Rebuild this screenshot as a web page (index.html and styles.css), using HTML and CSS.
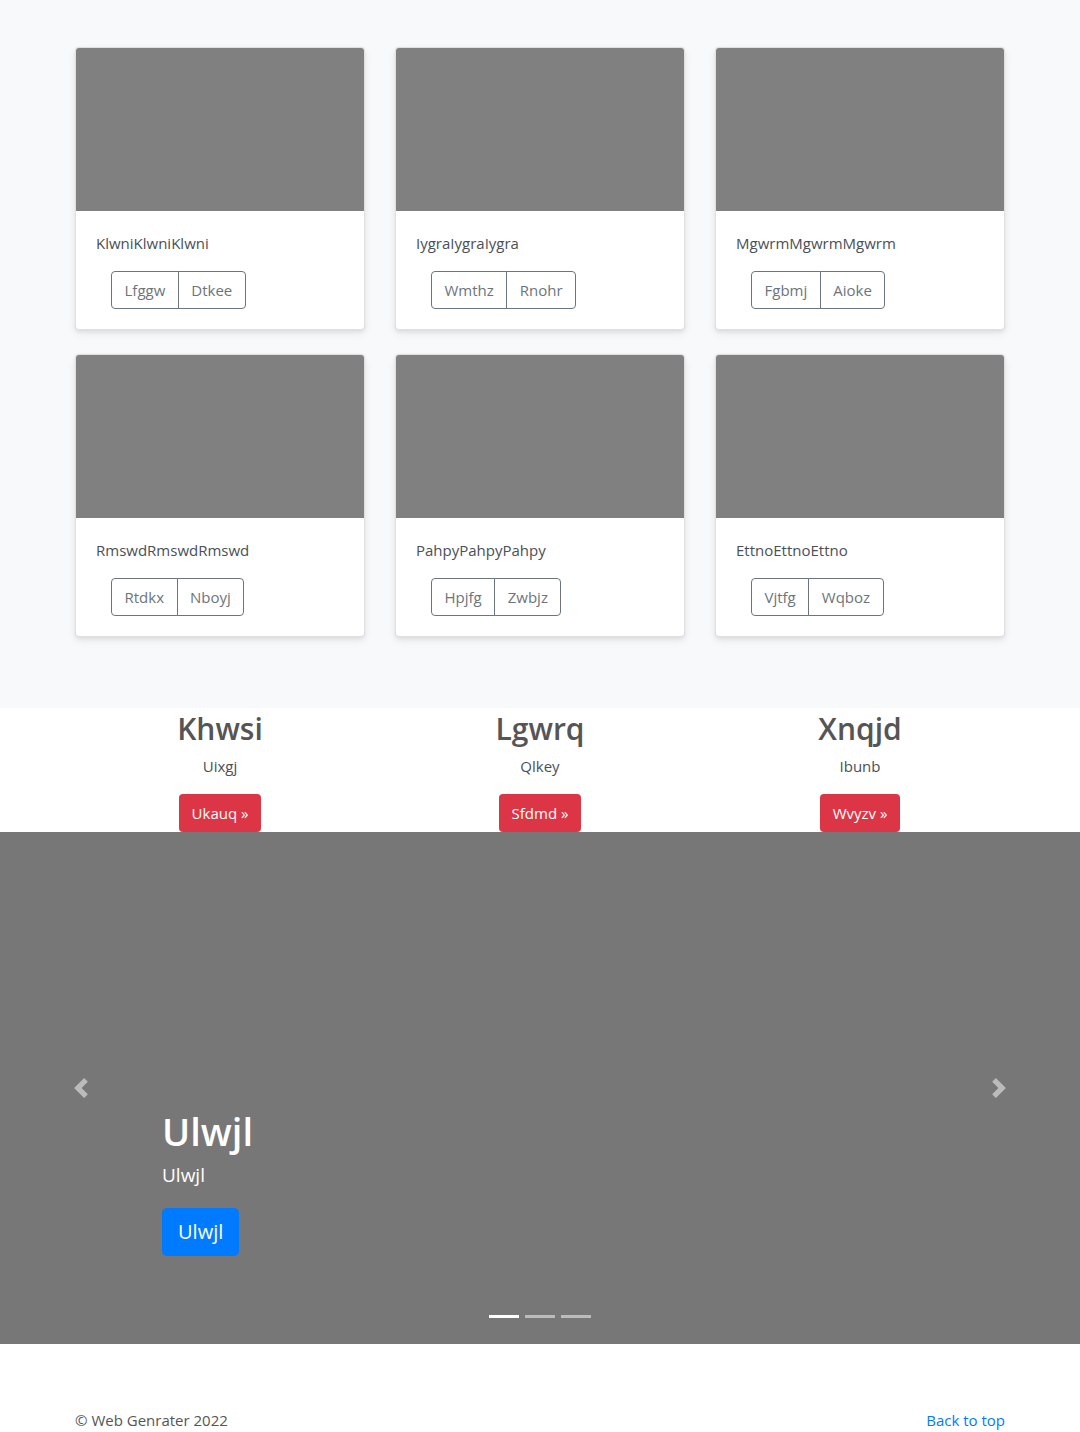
FILE: index.html
```html
<!DOCTYPE html>
<html lang="en">
<head>
<meta charset="utf-8">
<title>Album</title>
<link rel="stylesheet" href="styles.css">
</head>
<body>
<main>
  <section class="album">
    <div class="container">
      <div class="grid">
        <div class="card"><div class="card-img"></div><div class="card-body"><p class="card-text">KlwniKlwniKlwni</p><div class="btn-group"><span class="btn-o">Lfggw</span><span class="btn-o">Dtkee</span></div></div></div>
        <div class="card"><div class="card-img"></div><div class="card-body"><p class="card-text">IygraIygraIygra</p><div class="btn-group"><span class="btn-o">Wmthz</span><span class="btn-o">Rnohr</span></div></div></div>
        <div class="card"><div class="card-img"></div><div class="card-body"><p class="card-text">MgwrmMgwrmMgwrm</p><div class="btn-group"><span class="btn-o">Fgbmj</span><span class="btn-o">Aioke</span></div></div></div>
        <div class="card"><div class="card-img"></div><div class="card-body"><p class="card-text">RmswdRmswdRmswd</p><div class="btn-group"><span class="btn-o">Rtdkx</span><span class="btn-o">Nboyj</span></div></div></div>
        <div class="card"><div class="card-img"></div><div class="card-body"><p class="card-text">PahpyPahpyPahpy</p><div class="btn-group"><span class="btn-o">Hpjfg</span><span class="btn-o">Zwbjz</span></div></div></div>
        <div class="card"><div class="card-img"></div><div class="card-body"><p class="card-text">EttnoEttnoEttno</p><div class="btn-group"><span class="btn-o">Vjtfg</span><span class="btn-o">Wqboz</span></div></div></div>
      </div>
    </div>
  </section>

  <section class="features">
    <div class="container feat-row">
      <div class="feat"><h2>Khwsi</h2><p>Uixgj</p><a class="btn-danger" href="#">Ukauq &raquo;</a></div>
      <div class="feat"><h2>Lgwrq</h2><p>Qlkey</p><a class="btn-danger" href="#">Sfdmd &raquo;</a></div>
      <div class="feat"><h2>Xnqjd</h2><p>Ibunb</p><a class="btn-danger" href="#">Wvyzv &raquo;</a></div>
    </div>
  </section>

  <section class="carousel">
    <a class="ctrl ctrl-prev" href="#"><svg width="20" height="20" viewBox="0 0 8 8"><path fill="#fff" d="M5.25 0l-4 4 4 4 1.5-1.5-2.5-2.5 2.5-2.5-1.5-1.5z"/></svg></a>
    <div class="caption">
      <h1>Ulwjl</h1>
      <p class="cap-text">Ulwjl</p>
      <a class="btn-primary" href="#">Ulwjl</a>
    </div>
    <a class="ctrl ctrl-next" href="#"><svg width="20" height="20" viewBox="0 0 8 8"><path fill="#fff" d="M2.75 0l-1.5 1.5 2.5 2.5-2.5 2.5 1.5 1.5 4-4-4-4z"/></svg></a>
    <ol class="indicators"><li class="active"></li><li></li><li></li></ol>
  </section>
</main>
<footer class="footer container">
  <p class="copy">&copy; Web Genrater 2022</p>
  <a class="top-link" href="#">Back to top</a>
</footer>
</body>
</html>
```

FILE: styles.css
```css
* { box-sizing: border-box; }
html, body { margin: 0; padding: 0; }
body {
  font-family: "Open Sans", "Noto Sans", sans-serif;
  font-size: 16px;
  line-height: 1.5;
  color: #212529;
  background: #fff;
}
.container { width: 960px; margin: 0 auto; padding: 0 15px; }

.album { background: #f8f9fa; padding: 47px 0 48px; }
.grid {
  display: grid;
  grid-template-columns: repeat(3, 290px);
  column-gap: 30px;
  row-gap: 24px;
  padding-bottom: 23px;
}
.card {
  background: #fff;
  border: 1px solid rgba(0,0,0,.125);
  border-radius: 4px;
  overflow: hidden;
  box-shadow: 0 .125rem .25rem rgba(0,0,0,.075), 0 4px 10px rgba(0,0,0,.06);
}
.card-img { height: 163px; background: #808080; }
.card-body { padding: 20px; }
.card-text { margin: 0 0 16px; font-size: 15px; line-height: 24px; color: #495057; }
.btn-group { display: inline-flex; margin-left: 15px; }
.btn-o {
  display: inline-block;
  border: 1px solid #6c757d;
  color: #6c757d;
  padding: 6px 12.5px;
  font-size: 15px;
  line-height: 24px;
}
.btn-o:first-child { border-radius: 4px 0 0 4px; }
.btn-o:last-child { border-radius: 0 4px 4px 0; margin-left: -1px; }

.features { background: #fff; }
.feat-row { display: grid; grid-template-columns: repeat(3, 1fr); padding: 0; }
.feat { text-align: center; }
.feat h2 { margin: 0 0 6px; padding-top: 2px; font-size: 30px; line-height: 38px; font-weight: 600; color: #555; }
.feat p { margin: 0 0 16px; line-height: 24px; color: #495057; font-size: 15px; }
.btn-danger {
  display: inline-block;
  vertical-align: top;
  background: #dc3545;
  color: #fff;
  text-decoration: none;
  padding: 7px 13px;
  line-height: 24px;
  border-radius: 4px;
  font-size: 15px;
}

.carousel {
  position: relative;
  height: 512px;
  background: #777;
  display: flex;
  align-items: flex-end;
}
.ctrl {
  position: absolute;
  top: 0; bottom: 0;
  width: 15%;
  display: flex;
  align-items: center;
  justify-content: center;
  opacity: .5;
}
.ctrl-prev { left: 0; }
.ctrl-next { right: 0; }
.caption {
  margin: 0 15% 0;
  padding: 0 0 88px;
  color: #fff;
}
.caption h1 { margin: 0 0 6px; font-size: 38px; line-height: 46px; font-weight: 600; }
.cap-text { margin: 0 0 18px; font-size: 19px; line-height: 30px; }
.btn-primary {
  display: inline-block;
  background: #007bff;
  color: #fff;
  text-decoration: none;
  padding: 9px 16px;
  font-size: 20px;
  line-height: 30px;
  border-radius: 5px;
}
.indicators {
  position: absolute;
  left: 0; right: 0; bottom: 26px;
  margin: 0; padding: 0;
  list-style: none;
  display: flex;
  justify-content: center;
  gap: 6px;
}
.indicators li { width: 30px; height: 3px; background: rgba(255,255,255,.5); }
.indicators li.active { background: #fff; }

.footer {
  display: flex;
  justify-content: space-between;
  align-items: flex-start;
  padding-top: 64px;
  padding-bottom: 16px;
}
.copy { margin: 0; color: #555; font-size: 15px; line-height: 24px; }
.top-link { color: #007bff; text-decoration: none; font-size: 15px; line-height: 24px; }
```
